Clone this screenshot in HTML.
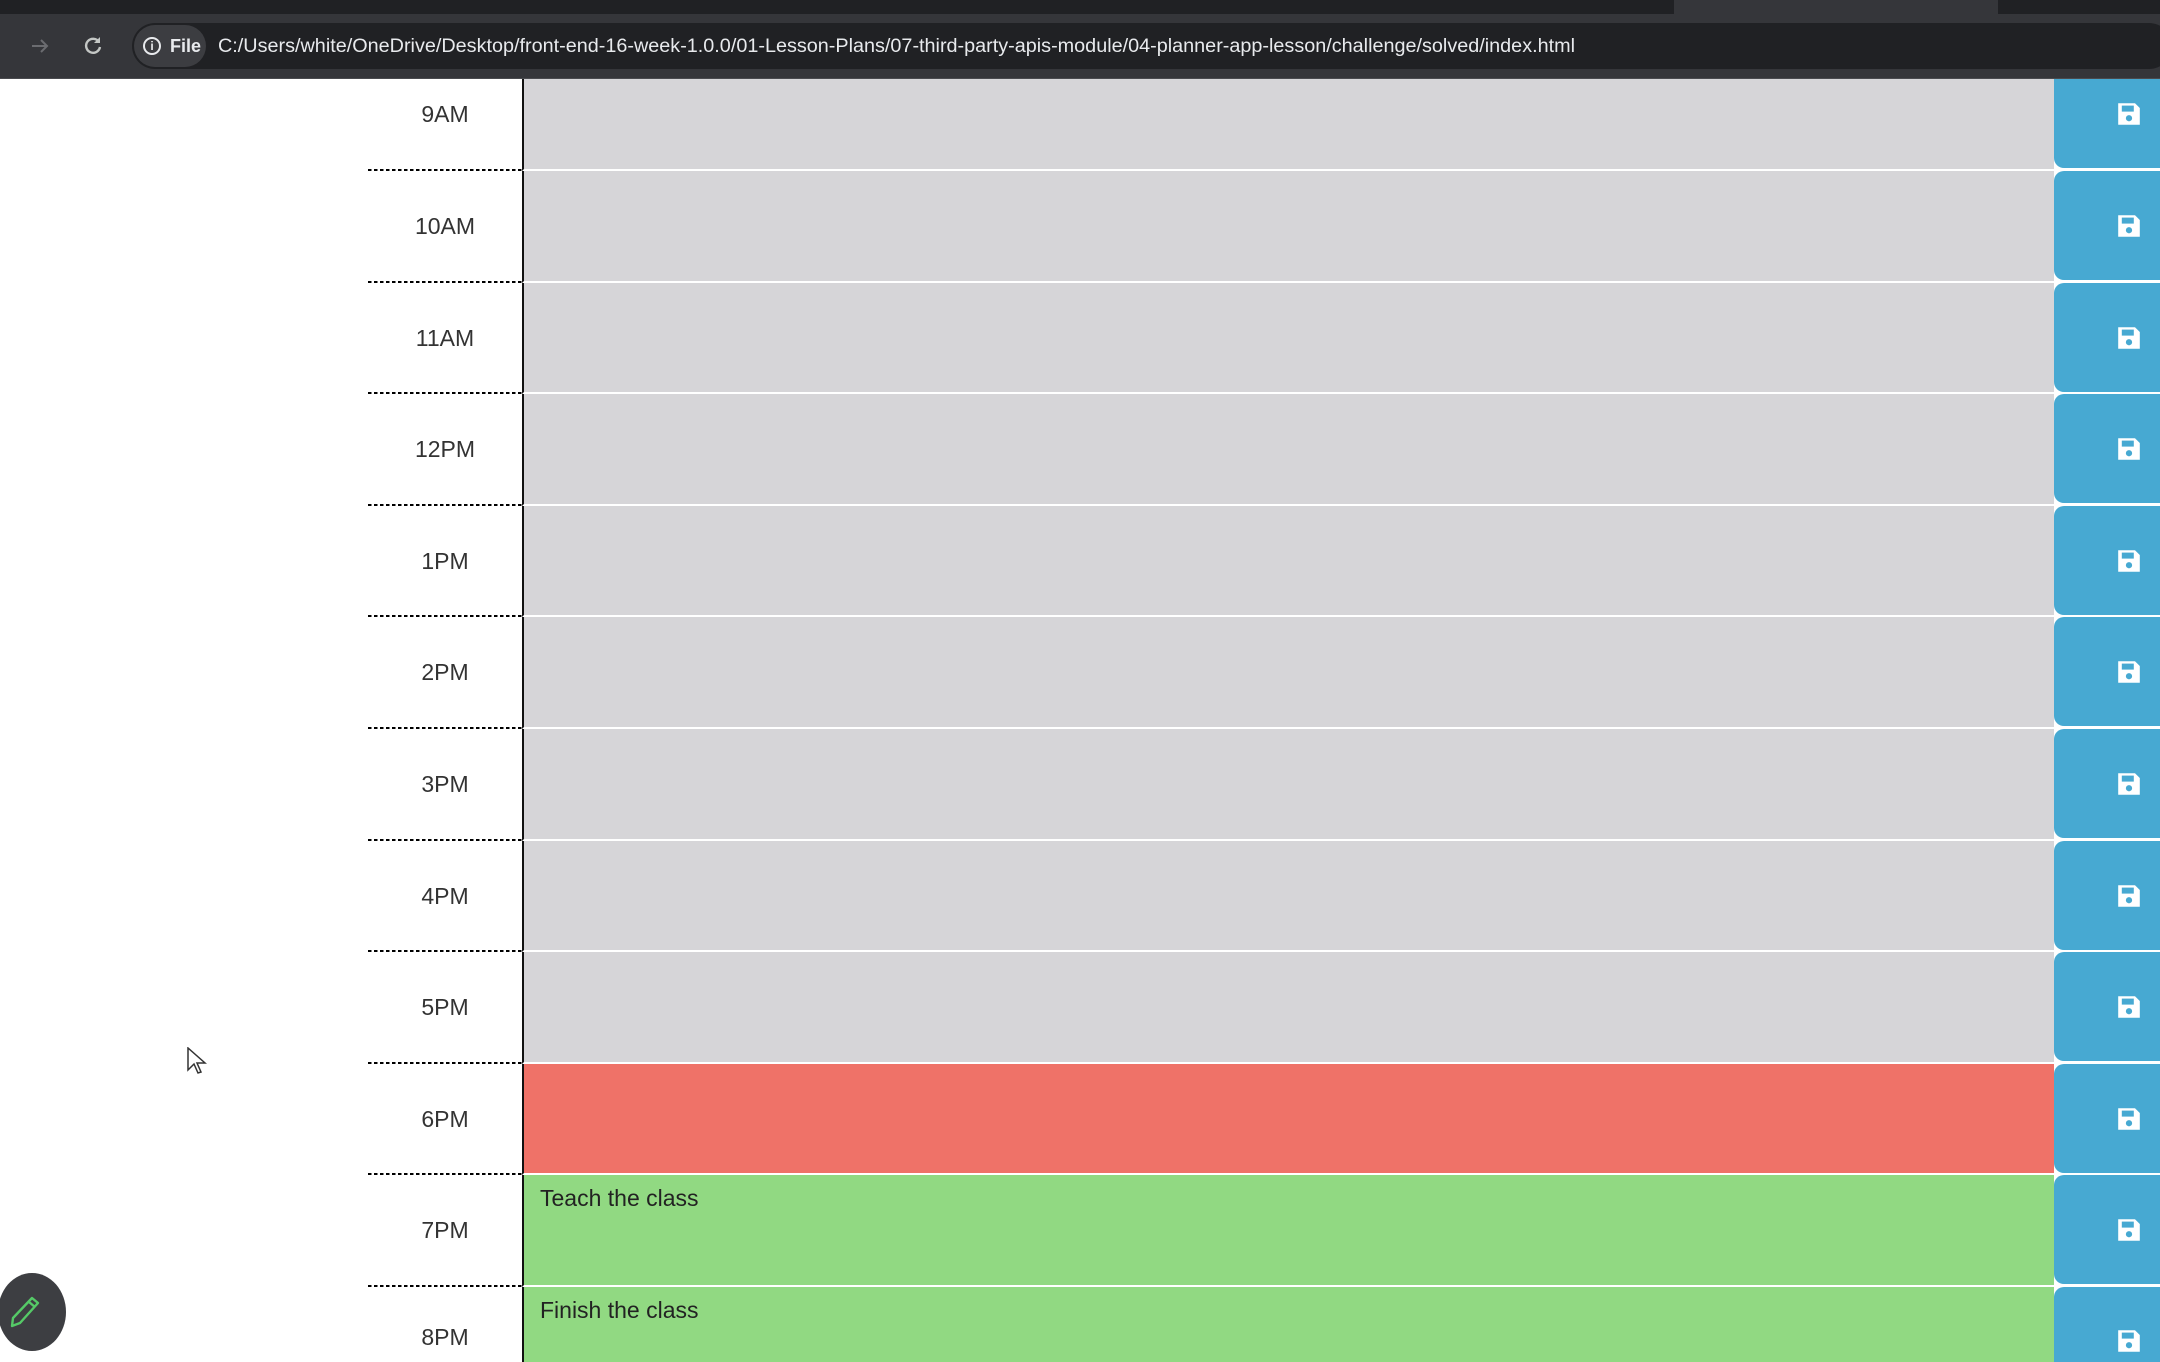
<!DOCTYPE html>
<html><head><meta charset="utf-8"><style>
*{margin:0;padding:0;box-sizing:border-box}
html,body{width:2160px;height:1362px;overflow:hidden}
body{background:#fff;position:relative;font-family:"Liberation Sans",sans-serif}
#wrap{position:absolute;left:0;top:0;width:2160px;height:1362px;overflow:hidden}
.top{position:absolute;left:0;top:0;width:2160px;height:14px;background:#202124;z-index:5}
.tab{position:absolute;top:0;left:1674px;width:324px;height:14px;background:#35363a}
.bar{position:absolute;left:0;top:14px;width:2160px;height:65px;background:#35363a;border-bottom:1px solid #4a4b4f;z-index:5}
.pill{position:absolute;left:132px;top:9px;width:2040px;height:46px;border-radius:23px;background:#202124}
.file{position:absolute;left:134px;top:11px;width:72px;height:42px;border-radius:21px;background:#3c3d41;color:#e8eaed;font-size:18px;font-weight:bold;line-height:42px;padding-left:36px}
.info{position:absolute;left:9px;top:12px;width:18px;height:18px;border:2px solid #e8eaed;border-radius:50%;font-size:12px;line-height:14px;text-align:center;font-weight:bold}
.row{position:absolute;left:0;width:2160px;height:111.6px}
.hour{position:absolute;left:368px;width:154px;height:111.6px;text-align:center;font-size:23px;color:#333;line-height:111.6px;background:linear-gradient(to right,#000 60%,transparent 60%) bottom left/6px 2px repeat-x}
.ta{position:absolute;left:522px;width:1532px;height:111.6px;border-left:2px solid #111;border-bottom:2px solid #fff;font-size:23px;color:#222;padding:10px 16px}
.past{background:#d6d5d8}.present{background:#ef7268}.future{background:#91d982}
.btn{position:absolute;left:2054px;width:130px;height:109px;background:#47a9d2;border-radius:10px}
.btn svg{position:absolute;left:63px;top:43px}
</style></head><body><div id="wrap">
<div class="top"><div class="tab"></div></div>
<div class="bar">
<svg style="position:absolute;left:30px;top:22px" width="20" height="20" viewBox="0 0 20 20"><path d="M2 10h15M11 4l6 6-6 6" stroke="#6b6c70" stroke-width="2" fill="none"/></svg>
<svg style="position:absolute;left:82px;top:20px" width="22" height="22" viewBox="0 0 22 22"><path d="M17 8a7 7 0 1 0 1 5" stroke="#c4c7c5" stroke-width="2.4" fill="none"/><path d="M18 3v6h-6z" fill="#c4c7c5"/></svg>
<div class="pill"></div>
<div class="file"><div class="info">i</div>File</div>
<svg style="position:absolute;left:218px;top:20px" width="1400" height="30"><text x="0" y="18" font-family="Liberation Sans, sans-serif" font-size="19" fill="#e8eaed" textLength="1357" lengthAdjust="spacingAndGlyphs">C:/Users/white/OneDrive/Desktop/front-end-16-week-1.0.0/01-Lesson-Plans/07-third-party-apis-module/04-planner-app-lesson/challenge/solved/index.html</text></svg>
</div>

<div class="row" style="top:59.4px"><div class="hour">9AM</div><div class="ta past"></div><div class="btn"><svg width="24" height="24" viewBox="0 0 20 20"><path d="M1 1h14l4 4v14H1z" fill="#fff"/><rect x="4" y="3" width="10" height="5" fill="#47a9d2"/><circle cx="10" cy="13.5" r="2.6" fill="#47a9d2"/></svg></div></div>
<div class="row" style="top:171px"><div class="hour">10AM</div><div class="ta past"></div><div class="btn"><svg width="24" height="24" viewBox="0 0 20 20"><path d="M1 1h14l4 4v14H1z" fill="#fff"/><rect x="4" y="3" width="10" height="5" fill="#47a9d2"/><circle cx="10" cy="13.5" r="2.6" fill="#47a9d2"/></svg></div></div>
<div class="row" style="top:282.6px"><div class="hour">11AM</div><div class="ta past"></div><div class="btn"><svg width="24" height="24" viewBox="0 0 20 20"><path d="M1 1h14l4 4v14H1z" fill="#fff"/><rect x="4" y="3" width="10" height="5" fill="#47a9d2"/><circle cx="10" cy="13.5" r="2.6" fill="#47a9d2"/></svg></div></div>
<div class="row" style="top:394.2px"><div class="hour">12PM</div><div class="ta past"></div><div class="btn"><svg width="24" height="24" viewBox="0 0 20 20"><path d="M1 1h14l4 4v14H1z" fill="#fff"/><rect x="4" y="3" width="10" height="5" fill="#47a9d2"/><circle cx="10" cy="13.5" r="2.6" fill="#47a9d2"/></svg></div></div>
<div class="row" style="top:505.8px"><div class="hour">1PM</div><div class="ta past"></div><div class="btn"><svg width="24" height="24" viewBox="0 0 20 20"><path d="M1 1h14l4 4v14H1z" fill="#fff"/><rect x="4" y="3" width="10" height="5" fill="#47a9d2"/><circle cx="10" cy="13.5" r="2.6" fill="#47a9d2"/></svg></div></div>
<div class="row" style="top:617.4px"><div class="hour">2PM</div><div class="ta past"></div><div class="btn"><svg width="24" height="24" viewBox="0 0 20 20"><path d="M1 1h14l4 4v14H1z" fill="#fff"/><rect x="4" y="3" width="10" height="5" fill="#47a9d2"/><circle cx="10" cy="13.5" r="2.6" fill="#47a9d2"/></svg></div></div>
<div class="row" style="top:729px"><div class="hour">3PM</div><div class="ta past"></div><div class="btn"><svg width="24" height="24" viewBox="0 0 20 20"><path d="M1 1h14l4 4v14H1z" fill="#fff"/><rect x="4" y="3" width="10" height="5" fill="#47a9d2"/><circle cx="10" cy="13.5" r="2.6" fill="#47a9d2"/></svg></div></div>
<div class="row" style="top:840.6px"><div class="hour">4PM</div><div class="ta past"></div><div class="btn"><svg width="24" height="24" viewBox="0 0 20 20"><path d="M1 1h14l4 4v14H1z" fill="#fff"/><rect x="4" y="3" width="10" height="5" fill="#47a9d2"/><circle cx="10" cy="13.5" r="2.6" fill="#47a9d2"/></svg></div></div>
<div class="row" style="top:952.2px"><div class="hour">5PM</div><div class="ta past"></div><div class="btn"><svg width="24" height="24" viewBox="0 0 20 20"><path d="M1 1h14l4 4v14H1z" fill="#fff"/><rect x="4" y="3" width="10" height="5" fill="#47a9d2"/><circle cx="10" cy="13.5" r="2.6" fill="#47a9d2"/></svg></div></div>
<div class="row" style="top:1063.8px"><div class="hour">6PM</div><div class="ta present"></div><div class="btn"><svg width="24" height="24" viewBox="0 0 20 20"><path d="M1 1h14l4 4v14H1z" fill="#fff"/><rect x="4" y="3" width="10" height="5" fill="#47a9d2"/><circle cx="10" cy="13.5" r="2.6" fill="#47a9d2"/></svg></div></div>
<div class="row" style="top:1175.4px"><div class="hour">7PM</div><div class="ta future">Teach the class</div><div class="btn"><svg width="24" height="24" viewBox="0 0 20 20"><path d="M1 1h14l4 4v14H1z" fill="#fff"/><rect x="4" y="3" width="10" height="5" fill="#47a9d2"/><circle cx="10" cy="13.5" r="2.6" fill="#47a9d2"/></svg></div></div>
<div class="row" style="top:1287px;height:75px"><div class="hour" style="height:75px;line-height:101px;background:none">8PM</div><div class="ta future" style="height:75px;border-bottom:0">Finish the class</div><div class="btn" style="height:75px;border-radius:10px 0 0 0"><svg width="24" height="24" viewBox="0 0 20 20" style="top:42px"><path d="M1 1h14l4 4v14H1z" fill="#fff"/><rect x="4" y="3" width="10" height="5" fill="#47a9d2"/><circle cx="10" cy="13.5" r="2.6" fill="#47a9d2"/></svg></div></div>

<svg style="position:absolute;left:187px;top:1047px" width="20" height="30" viewBox="0 0 20 30"><path d="M1 1v22l6-6 4 9 3-1-4-9h8z" fill="#fff" stroke="#333" stroke-width="1.5"/></svg>

<div style="position:absolute;left:-2px;top:1273px;width:68px;height:78px;border-radius:50%;background:#3d3e42"></div>
<svg style="position:absolute;left:6px;top:1293px" width="40" height="40" viewBox="0 0 40 40"><path d="M26 5l6 5-18 20-8 3 1-8z M23 9l6 5" stroke="#55c967" stroke-width="2.4" fill="none" stroke-linejoin="round"/></svg>
</div></body></html>
